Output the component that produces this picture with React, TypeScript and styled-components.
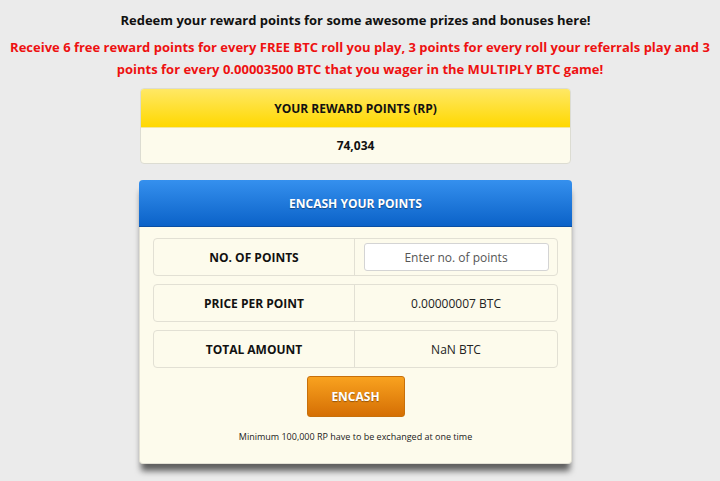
import styled, { createGlobalStyle } from 'styled-components';

const GlobalStyle = createGlobalStyle`
  body {
    margin: 0;
    background: #ebebeb;
    font-family: "Open Sans", "Noto Sans", Arial, sans-serif;
    color: #111;
  }
`;

const Page = styled.div`
  width: 711px;
  padding-top: 10px;
  padding-bottom: 20px;
  display: flex;
  flex-direction: column;
  align-items: center;
`;

const Intro = styled.p`
  margin: 0;
  font-size: 13px;
  font-weight: 700;
  line-height: 20px;
  text-align: center;
`;

const Promo = styled.p`
  margin: 6px -9px 0 0;
  font-size: 13px;
  font-weight: 700;
  line-height: 22px;
  color: #ee1111;
  text-align: center;
  white-space: nowrap;
`;

const PointsBox = styled.div`
  margin-top: 8px;
  width: 429px;
  border: 1px solid #dcdcd2;
  border-radius: 4px;
  overflow: hidden;
  background: #fdfbec;
`;

const PointsHeader = styled.div`
  height: 38px;
  display: flex;
  align-items: center;
  justify-content: center;
  background: linear-gradient(#ffe865, #ffd800);
  font-size: 12px;
  font-weight: 700;
  border-bottom: 1px solid #f2e7a0;
`;

const PointsValue = styled.div`
  height: 35px;
  display: flex;
  align-items: center;
  justify-content: center;
  font-size: 12px;
  font-weight: 700;
`;

const EncashBox = styled.div`
  margin-top: 16px;
  width: 431px;
  border-radius: 4px;
  background: #fdfbec;
  box-shadow: 0 9px 6px -2px rgba(0, 0, 0, 0.6);
  border: 1px solid #e2e0d4;
  border-top: none;
`;

const EncashHeader = styled.div`
  height: 46px;
  display: flex;
  align-items: center;
  justify-content: center;
  border-radius: 4px 4px 0 0;
  background: linear-gradient(#3590ee, #0b62c8);
  border-bottom: 1px solid #0a4fa3;
  color: #fff;
  font-size: 12px;
  font-weight: 700;
  text-shadow: 0 1px 1px rgba(0, 0, 0, 0.4);
  margin: 0 -1px;
`;

const EncashBody = styled.div`
  padding: 11px 13px 20px;
  display: flex;
  flex-direction: column;
  align-items: center;
`;

const Rows = styled.div`
  width: 100%;
  display: flex;
  flex-direction: column;
  gap: 8px;
`;

const Row = styled.div`
  height: 38px;
  display: grid;
  grid-template-columns: 201px 1fr;
  border: 1px solid #e2e0d4;
  border-radius: 4px;
  box-sizing: border-box;
`;

const Label = styled.div`
  display: flex;
  align-items: center;
  justify-content: center;
  font-size: 12px;
  font-weight: 700;
  border-right: 1px solid #e2e0d4;
`;

const Value = styled.div`
  display: flex;
  align-items: center;
  justify-content: center;
  font-size: 12px;
  color: #222;
`;

const PointsInput = styled.input`
  width: 185px;
  height: 28px;
  box-sizing: border-box;
  border: 1px solid #d4d4d4;
  border-radius: 3px;
  background: #fff;
  font-family: inherit;
  font-size: 12px;
  text-align: center;
  outline: none;

  &::placeholder {
    color: #555;
  }
`;

const EncashButton = styled.button`
  margin-top: 8px;
  width: 98px;
  height: 41px;
  border: 1px solid #c8700a;
  border-radius: 3px;
  background: linear-gradient(#f9a21f, #d56f04);
  color: #fff;
  font-family: inherit;
  font-size: 12px;
  font-weight: 700;
  text-shadow: 0 1px 1px rgba(0, 0, 0, 0.35);
  cursor: pointer;
`;

const Note = styled.p`
  margin: 13px 0 0;
  font-size: 9px;
  color: #222;
`;

const rows = [
  { label: 'PRICE PER POINT', value: '0.00000007 BTC' },
  { label: 'TOTAL AMOUNT', value: 'NaN BTC' },
];

const App = () => {
  return (
    <>
      <GlobalStyle />
      <Page>
        <Intro>Redeem your reward points for some awesome prizes and bonuses here!</Intro>
        <Promo>
          Receive 6 free reward points for every FREE BTC roll you play, 3 points for every roll your referrals play and 3
          <br />
          points for every 0.00003500 BTC that you wager in the MULTIPLY BTC game!
        </Promo>
        <PointsBox>
          <PointsHeader>YOUR REWARD POINTS (RP)</PointsHeader>
          <PointsValue>74,034</PointsValue>
        </PointsBox>
        <EncashBox>
          <EncashHeader>ENCASH YOUR POINTS</EncashHeader>
          <EncashBody>
            <Rows>
              <Row>
                <Label>NO. OF POINTS</Label>
                <Value>
                  <PointsInput placeholder="Enter no. of points" />
                </Value>
              </Row>
              {rows.map((r) => (
                <Row key={r.label}>
                  <Label>{r.label}</Label>
                  <Value>{r.value}</Value>
                </Row>
              ))}
            </Rows>
            <EncashButton>ENCASH</EncashButton>
            <Note>Minimum 100,000 RP have to be exchanged at one time</Note>
          </EncashBody>
        </EncashBox>
      </Page>
    </>
  );
};

export default App;
